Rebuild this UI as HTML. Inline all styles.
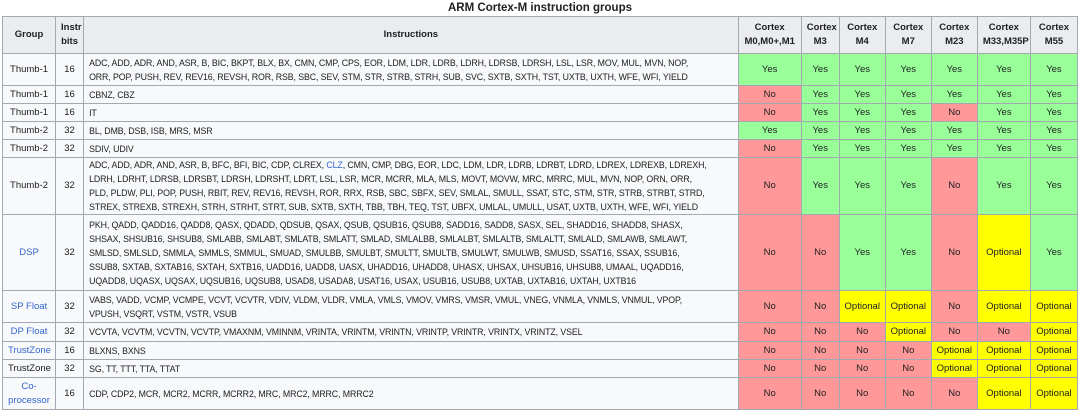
<!DOCTYPE html>
<html><head><meta charset="utf-8"><style>
body{margin:0;background:#fff;font-family:"Liberation Sans",sans-serif;color:#202122;font-size:9.5px;}
.t{position:absolute;left:0;top:0;width:1080px;}
.cap{text-align:center;font-weight:bold;font-size:11.5px;height:16px;line-height:16px;padding-left:0;}
table{border-collapse:collapse;table-layout:fixed;width:1076px;margin-left:2px;background:#f8f9fa;}
td,th{border:1px solid #a2a9b1;padding:0 5px;line-height:14px;white-space:nowrap;overflow:hidden;}
th{background:#eaecf0;font-weight:bold;text-align:center;font-size:9.5px;}
td.g,td.b{text-align:center;}
td.i{text-align:left;font-size:8.8px;letter-spacing:-0.1px;}
.y{background:#9f9;text-align:center;padding:0;}
.n{background:#f99;text-align:center;padding:0;}
.o{background:#ff0;text-align:center;padding:0;}
a{color:#3366cc;text-decoration:none;}
</style></head><body><div class="t">
<div class="cap">ARM Cortex-M instruction groups</div>
<table>
<colgroup><col style="width:53px"><col style="width:28px"><col style="width:654px"><col style="width:63px"><col style="width:38px"><col style="width:46px"><col style="width:46px"><col style="width:46px"><col style="width:53px"><col style="width:47px"></colgroup>
<tr style="height:37px"><th>Group</th><th>Instr<br>bits</th><th>Instructions</th><th>Cortex<br>M0,M0+,M1</th><th>Cortex<br>M3</th><th>Cortex<br>M4</th><th>Cortex<br>M7</th><th>Cortex<br>M23</th><th>Cortex<br>M33,M35P</th><th>Cortex<br>M55</th></tr>
<tr style="height:32px"><td class="g">Thumb-1</td><td class="b">16</td><td class="i">ADC, ADD, ADR, AND, ASR, B, BIC, BKPT, BLX, BX, CMN, CMP, CPS, EOR, LDM, LDR, LDRB, LDRH, LDRSB, LDRSH, LSL, LSR, MOV, MUL, MVN, NOP,<br>ORR, POP, PUSH, REV, REV16, REVSH, ROR, RSB, SBC, SEV, STM, STR, STRB, STRH, SUB, SVC, SXTB, SXTH, TST, UXTB, UXTH, WFE, WFI, YIELD</td><td class="y">Yes</td><td class="y">Yes</td><td class="y">Yes</td><td class="y">Yes</td><td class="y">Yes</td><td class="y">Yes</td><td class="y">Yes</td></tr>
<tr style="height:18px"><td class="g">Thumb-1</td><td class="b">16</td><td class="i">CBNZ, CBZ</td><td class="n">No</td><td class="y">Yes</td><td class="y">Yes</td><td class="y">Yes</td><td class="y">Yes</td><td class="y">Yes</td><td class="y">Yes</td></tr>
<tr style="height:18px"><td class="g">Thumb-1</td><td class="b">16</td><td class="i">IT</td><td class="n">No</td><td class="y">Yes</td><td class="y">Yes</td><td class="y">Yes</td><td class="n">No</td><td class="y">Yes</td><td class="y">Yes</td></tr>
<tr style="height:18px"><td class="g">Thumb-2</td><td class="b">32</td><td class="i">BL, DMB, DSB, ISB, MRS, MSR</td><td class="y">Yes</td><td class="y">Yes</td><td class="y">Yes</td><td class="y">Yes</td><td class="y">Yes</td><td class="y">Yes</td><td class="y">Yes</td></tr>
<tr style="height:18px"><td class="g">Thumb-2</td><td class="b">32</td><td class="i">SDIV, UDIV</td><td class="n">No</td><td class="y">Yes</td><td class="y">Yes</td><td class="y">Yes</td><td class="y">Yes</td><td class="y">Yes</td><td class="y">Yes</td></tr>
<tr style="height:57px"><td class="g">Thumb-2</td><td class="b">32</td><td class="i">ADC, ADD, ADR, AND, ASR, B, BFC, BFI, BIC, CDP, CLREX, <a>CLZ</a>, CMN, CMP, DBG, EOR, LDC, LDM, LDR, LDRB, LDRBT, LDRD, LDREX, LDREXB, LDREXH,<br>LDRH, LDRHT, LDRSB, LDRSBT, LDRSH, LDRSHT, LDRT, LSL, LSR, MCR, MCRR, MLA, MLS, MOVT, MOVW, MRC, MRRC, MUL, MVN, NOP, ORN, ORR,<br>PLD, PLDW, PLI, POP, PUSH, RBIT, REV, REV16, REVSH, ROR, RRX, RSB, SBC, SBFX, SEV, SMLAL, SMULL, SSAT, STC, STM, STR, STRB, STRBT, STRD,<br>STREX, STREXB, STREXH, STRH, STRHT, STRT, SUB, SXTB, SXTH, TBB, TBH, TEQ, TST, UBFX, UMLAL, UMULL, USAT, UXTB, UXTH, WFE, WFI, YIELD</td><td class="n">No</td><td class="y">Yes</td><td class="y">Yes</td><td class="y">Yes</td><td class="n">No</td><td class="y">Yes</td><td class="y">Yes</td></tr>
<tr style="height:76px"><td class="g"><a>DSP</a></td><td class="b">32</td><td class="i">PKH, QADD, QADD16, QADD8, QASX, QDADD, QDSUB, QSAX, QSUB, QSUB16, QSUB8, SADD16, SADD8, SASX, SEL, SHADD16, SHADD8, SHASX,<br>SHSAX, SHSUB16, SHSUB8, SMLABB, SMLABT, SMLATB, SMLATT, SMLAD, SMLALBB, SMLALBT, SMLALTB, SMLALTT, SMLALD, SMLAWB, SMLAWT,<br>SMLSD, SMLSLD, SMMLA, SMMLS, SMMUL, SMUAD, SMULBB, SMULBT, SMULTT, SMULTB, SMULWT, SMULWB, SMUSD, SSAT16, SSAX, SSUB16,<br>SSUB8, SXTAB, SXTAB16, SXTAH, SXTB16, UADD16, UADD8, UASX, UHADD16, UHADD8, UHASX, UHSAX, UHSUB16, UHSUB8, UMAAL, UQADD16,<br>UQADD8, UQASX, UQSAX, UQSUB16, UQSUB8, USAD8, USADA8, USAT16, USAX, USUB16, USUB8, UXTAB, UXTAB16, UXTAH, UXTB16</td><td class="n">No</td><td class="n">No</td><td class="y">Yes</td><td class="y">Yes</td><td class="n">No</td><td class="o">Optional</td><td class="y">Yes</td></tr>
<tr style="height:32px"><td class="g"><a>SP Float</a></td><td class="b">32</td><td class="i">VABS, VADD, VCMP, VCMPE, VCVT, VCVTR, VDIV, VLDM, VLDR, VMLA, VMLS, VMOV, VMRS, VMSR, VMUL, VNEG, VNMLA, VNMLS, VNMUL, VPOP,<br>VPUSH, VSQRT, VSTM, VSTR, VSUB</td><td class="n">No</td><td class="n">No</td><td class="o">Optional</td><td class="o">Optional</td><td class="n">No</td><td class="o">Optional</td><td class="o">Optional</td></tr>
<tr style="height:19px"><td class="g"><a>DP Float</a></td><td class="b">32</td><td class="i">VCVTA, VCVTM, VCVTN, VCVTP, VMAXNM, VMINNM, VRINTA, VRINTM, VRINTN, VRINTP, VRINTR, VRINTX, VRINTZ, VSEL</td><td class="n">No</td><td class="n">No</td><td class="n">No</td><td class="o">Optional</td><td class="n">No</td><td class="n">No</td><td class="o">Optional</td></tr>
<tr style="height:18px"><td class="g"><a>TrustZone</a></td><td class="b">16</td><td class="i">BLXNS, BXNS</td><td class="n">No</td><td class="n">No</td><td class="n">No</td><td class="n">No</td><td class="o">Optional</td><td class="o">Optional</td><td class="o">Optional</td></tr>
<tr style="height:18px"><td class="g">TrustZone</td><td class="b">32</td><td class="i">SG, TT, TTT, TTA, TTAT</td><td class="n">No</td><td class="n">No</td><td class="n">No</td><td class="n">No</td><td class="o">Optional</td><td class="o">Optional</td><td class="o">Optional</td></tr>
<tr style="height:32px"><td class="g"><a>Co-<br>processor</a></td><td class="b">16</td><td class="i">CDP, CDP2, MCR, MCR2, MCRR, MCRR2, MRC, MRC2, MRRC, MRRC2</td><td class="n">No</td><td class="n">No</td><td class="n">No</td><td class="n">No</td><td class="n">No</td><td class="o">Optional</td><td class="o">Optional</td></tr>
</table></div></body></html>
